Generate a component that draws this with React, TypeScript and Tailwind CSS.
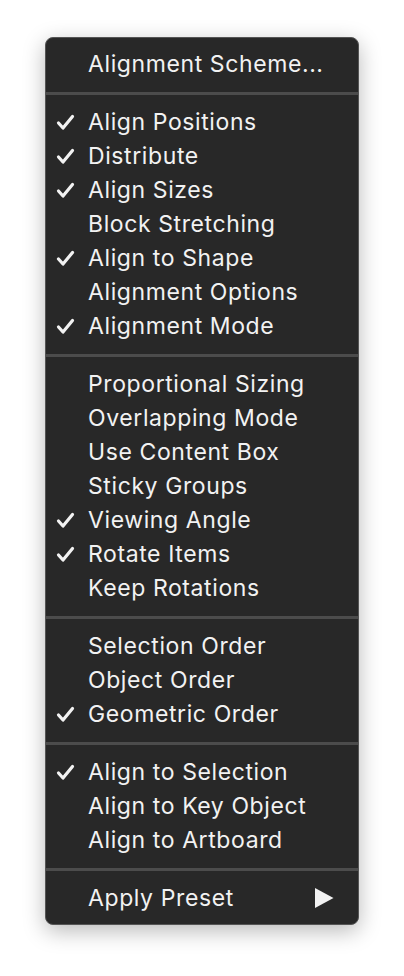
import React from "react";

type Item = { label: string; checked?: boolean; submenu?: boolean };

const groups: Item[][] = [
  [{ label: "Alignment Scheme..." }],
  [
    { label: "Align Positions", checked: true },
    { label: "Distribute", checked: true },
    { label: "Align Sizes", checked: true },
    { label: "Block Stretching" },
    { label: "Align to Shape", checked: true },
    { label: "Alignment Options" },
    { label: "Alignment Mode", checked: true },
  ],
  [
    { label: "Proportional Sizing" },
    { label: "Overlapping Mode" },
    { label: "Use Content Box" },
    { label: "Sticky Groups" },
    { label: "Viewing Angle", checked: true },
    { label: "Rotate Items", checked: true },
    { label: "Keep Rotations" },
  ],
  [
    { label: "Selection Order" },
    { label: "Object Order" },
    { label: "Geometric Order", checked: true },
  ],
  [
    { label: "Align to Selection", checked: true },
    { label: "Align to Key Object" },
    { label: "Align to Artboard" },
  ],
  [{ label: "Apply Preset", submenu: true }],
];

function Check() {
  return (
    <svg width="19" height="17" viewBox="0 0 19 17" className="block">
      <path
        d="M2.5 9 L7 14 L16.5 2.5"
        fill="none"
        stroke="#f2f2f2"
        strokeWidth="3.2"
        strokeLinecap="round"
        strokeLinejoin="round"
      />
    </svg>
  );
}

function Row({ item }: { item: Item }) {
  return (
    <div className="flex h-[34px] items-center">
      <div className="flex w-[42px] justify-end pr-[13px]">{item.checked ? <Check /> : null}</div>
      <span className="text-[23px] leading-none tracking-[0.6px] text-[#f2f2f2]">{item.label}</span>
      {item.submenu ? (
        <svg width="19" height="20" viewBox="0 0 19 20" className="ml-auto mr-[24px] block">
          <path d="M0 0 L18.5 10 L0 20 Z" fill="#f2f2f2" />
        </svg>
      ) : null}
    </div>
  );
}

export default function App() {
  return (
    <div className="flex min-h-[976px] w-[404px] items-start justify-start bg-white pl-[45px] pt-[37px]" style={{ fontFamily: "Inter, 'Noto Sans', sans-serif" }}>
      <div className="w-[314px] overflow-hidden rounded-[8px] border border-[#555555] bg-[#282828] py-[9px] shadow-[0_6px_22px_rgba(0,0,0,0.28)]">
        {groups.map((g, gi) => (
          <React.Fragment key={gi}>
            {gi > 0 ? (
              <div className="flex h-[24px] items-center">
                <div className="h-[3px] w-full bg-[#4c4c4c]" />
              </div>
            ) : null}
            {g.map((it) => (
              <Row key={it.label} item={it} />
            ))}
          </React.Fragment>
        ))}
      </div>
    </div>
  );
}
